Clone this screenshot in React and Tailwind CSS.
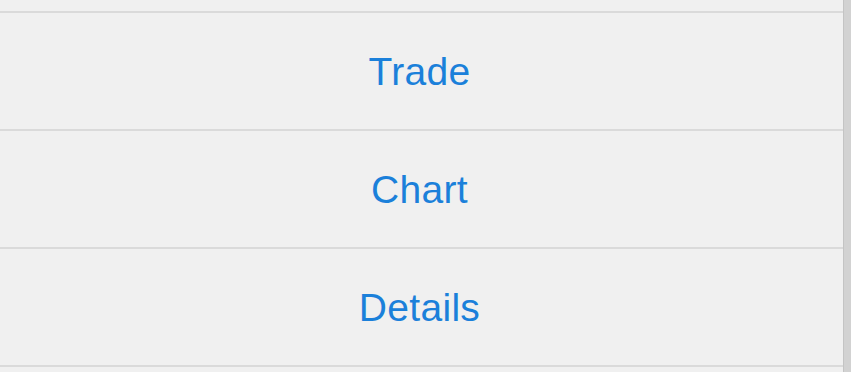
export default function App() {
  const items = ["Trade", "Chart", "Details"];
  return (
    <div className="flex h-[372px] w-[851px] overflow-hidden bg-[#f0f0f0]">
      <div className="flex flex-1 flex-col">
        <div className="h-[13px] shrink-0 border-b-2 border-[#dadada]" />
        {items.map((label) => (
          <div
            key={label}
            className="flex h-[118px] shrink-0 items-center justify-center border-b-2 border-[#dadada] pr-[4px]"
          >
            <span
              className="text-[39px] leading-none tracking-[0.3px] text-[#1b80da]"
              style={{ fontFamily: '"Liberation Sans", Arial, sans-serif' }}
            >
              {label}
            </span>
          </div>
        ))}
      </div>
      <div className="w-[8px] border-l border-[#c4c4c4] bg-[#d2d2d2]" />
    </div>
  );
}
